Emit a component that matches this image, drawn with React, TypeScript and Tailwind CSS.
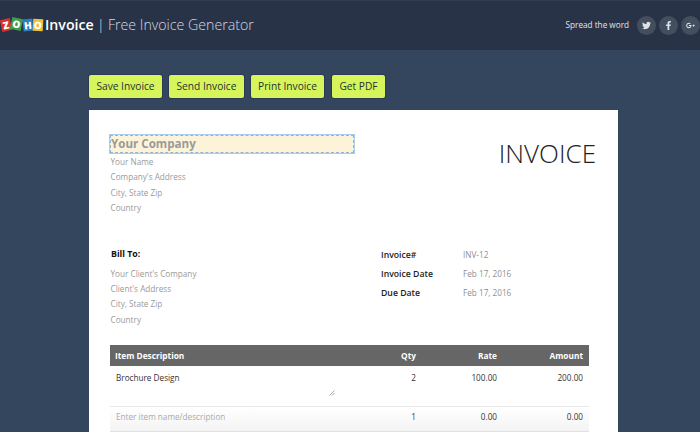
import { FaTwitter, FaFacebookF, FaGooglePlusG } from "react-icons/fa";
import type { ReactNode } from "react";

const tiles = [
  { l: "Z", c: "bg-[#d9322c] -rotate-12 w-[10px]" },
  { l: "O", c: "bg-[#3f9d4a] rotate-12 w-[11px] -mt-[1px]" },
  { l: "H", c: "bg-[#2a7fc0] -rotate-6 w-[10px] ml-[1px] mt-[1px]" },
  { l: "O", c: "bg-[#f2c230] rotate-3 w-[10px] mt-[1px]" },
];

function Btn({ label, w }: { label: string; w: string }) {
  return (
    <button className={`${w} h-[23px] rounded-[2px] bg-[#d6f55a] text-[10.2px] text-[#263232] ring-1 ring-[#2b3a55] flex items-center justify-center`}>
      {label}
    </button>
  );
}

function Social({ children }: { children: ReactNode }) {
  return (
    <div className="w-[19px] h-[19px] shrink-0 rounded-full bg-[#434e5e] flex items-center justify-center text-[#dfe3e8] text-[9px]">
      {children}
    </div>
  );
}

function Field({ label, value }: { label: string; value: string }) {
  return (
    <div className="flex h-[19px] items-center">
      <div className="w-[82px] ml-[1px] text-[8.7px] font-semibold text-[#222]">{label}</div>
      <div className="text-[8.2px] text-[#8f8f8f]">{value}</div>
    </div>
  );
}

export default function App() {
  return (
    <div className="w-[700px] h-[432px] overflow-hidden bg-[#34465d] font-['Open_Sans',sans-serif]">
      <header className="h-[50px] bg-[#283347] border-t border-[#323d51] flex items-center justify-between">
        <div className="flex items-center pb-[2px]">
          <div className="flex items-center ml-[1px] mr-[2px]">
            {tiles.map((t, i) => (
              <span key={i} className={`${t.c} h-[12px] flex items-center justify-center text-[10px] leading-none font-extrabold text-white`}>
                {t.l}
              </span>
            ))}
          </div>
          <span className="text-[14.2px] font-semibold text-white">Invoice</span>
          <span className="text-[15px] font-light text-[#d5d9e0] ml-[3px]">|</span>
          <span className="text-[14.2px] font-light text-[#d5d9e0] ml-[3px]">Free Invoice Generator</span>
        </div>
        <div className="flex items-center gap-[3px]">
          <span className="text-[8.2px] text-[#e2e5ea] mr-[5px]">Spread the word</span>
          <Social><FaTwitter /></Social>
          <Social><FaFacebookF /></Social>
          <Social><FaGooglePlusG /></Social>
        </div>
      </header>
      <main className="pl-[89px] pt-[25px]">
        <div className="flex gap-[7px]">
          <Btn label="Save Invoice" w="w-[73px]" />
          <Btn label="Send Invoice" w="w-[75px]" />
          <Btn label="Print Invoice" w="w-[73px]" />
          <div className="ml-[1px]"><Btn label="Get PDF" w="w-[53px]" /></div>
        </div>
        <section className="mt-[12px] w-[529px] h-[400px] bg-white pl-[21px] pr-[29px] pt-[25px]">
          <div className="flex justify-between">
            <div>
              <div className="w-[244px] h-[18px] bg-[#fdf3d8] border border-dashed border-[#8fb4d6] outline outline-1 outline-[#a9cdf0] flex items-center text-[11.6px] font-bold text-[#9a9a9a]">
                Your Company
              </div>
              <div className="mt-[1px] ml-[0.5px] text-[8.2px] text-[#9a9a9a] leading-[15.4px]">
                <div>Your Name</div>
                <div>Company's Address</div>
                <div>City, State Zip</div>
                <div>Country</div>
              </div>
            </div>
            <div className="text-[26px] font-light text-[#222] -mr-[7px] leading-none mt-[5px]">INVOICE</div>
          </div>
          <div className="flex mt-[32px]">
            <div className="w-[270px]">
              <div className="ml-[1px] text-[8.8px] font-bold text-[#111] leading-[12px]">Bill To:</div>
              <div className="mt-[6px] text-[8.2px] text-[#9a9a9a] leading-[15.4px] ml-[0.5px]">
                <div>Your Client's Company</div>
                <div>Client's Address</div>
                <div>City, State Zip</div>
                <div>Country</div>
              </div>
            </div>
            <div className="-mt-[2px]">
              <Field label="Invoice#" value="INV-12" />
              <Field label="Invoice Date" value="Feb 17, 2016" />
              <Field label="Due Date" value="Feb 17, 2016" />
            </div>
          </div>
          <div className="mt-[18px] h-[21px] bg-[#666] flex items-center text-[8.3px] font-bold text-white pl-[5px] pr-[6px]">
            <div className="flex-1">Item Description</div>
            <div className="w-[40px] text-right">Qty</div>
            <div className="w-[81px] text-right">Rate</div>
            <div className="w-[86px] text-right">Amount</div>
          </div>
          <div className="relative h-[41px] flex pt-[6px] text-[8.2px] text-[#333] pl-[6px] pr-[6px] leading-[12px] border-b border-[#e8e8e8]">
            <div className="flex-1">Brochure Design</div>
            <div className="w-[40px] text-right">2</div>
            <div className="w-[81px] text-right">100.00</div>
            <div className="w-[86px] text-right">200.00</div>
            <svg className="absolute left-[219px] top-[24px]" width="6" height="6" viewBox="0 0 6 6"><path d="M0.5 5.5L5.5 0.5M3 5.5L5.5 3" stroke="#888" strokeWidth="0.7" /></svg>
          </div>
          <div className="relative h-[25px] flex pt-[4px] text-[8.2px] text-[#333] pl-[6px] pr-[6px] leading-[12px] border-b border-[#e0e0e0] bg-gradient-to-b from-white to-[#f3f3f3]">
            <div className="flex-1 text-[#aaa]">Enter item name/description</div>
            <div className="w-[40px] text-right">1</div>
            <div className="w-[81px] text-right">0.00</div>
            <div className="w-[86px] text-right">0.00</div>
          </div>
        </section>
      </main>
    </div>
  );
}
